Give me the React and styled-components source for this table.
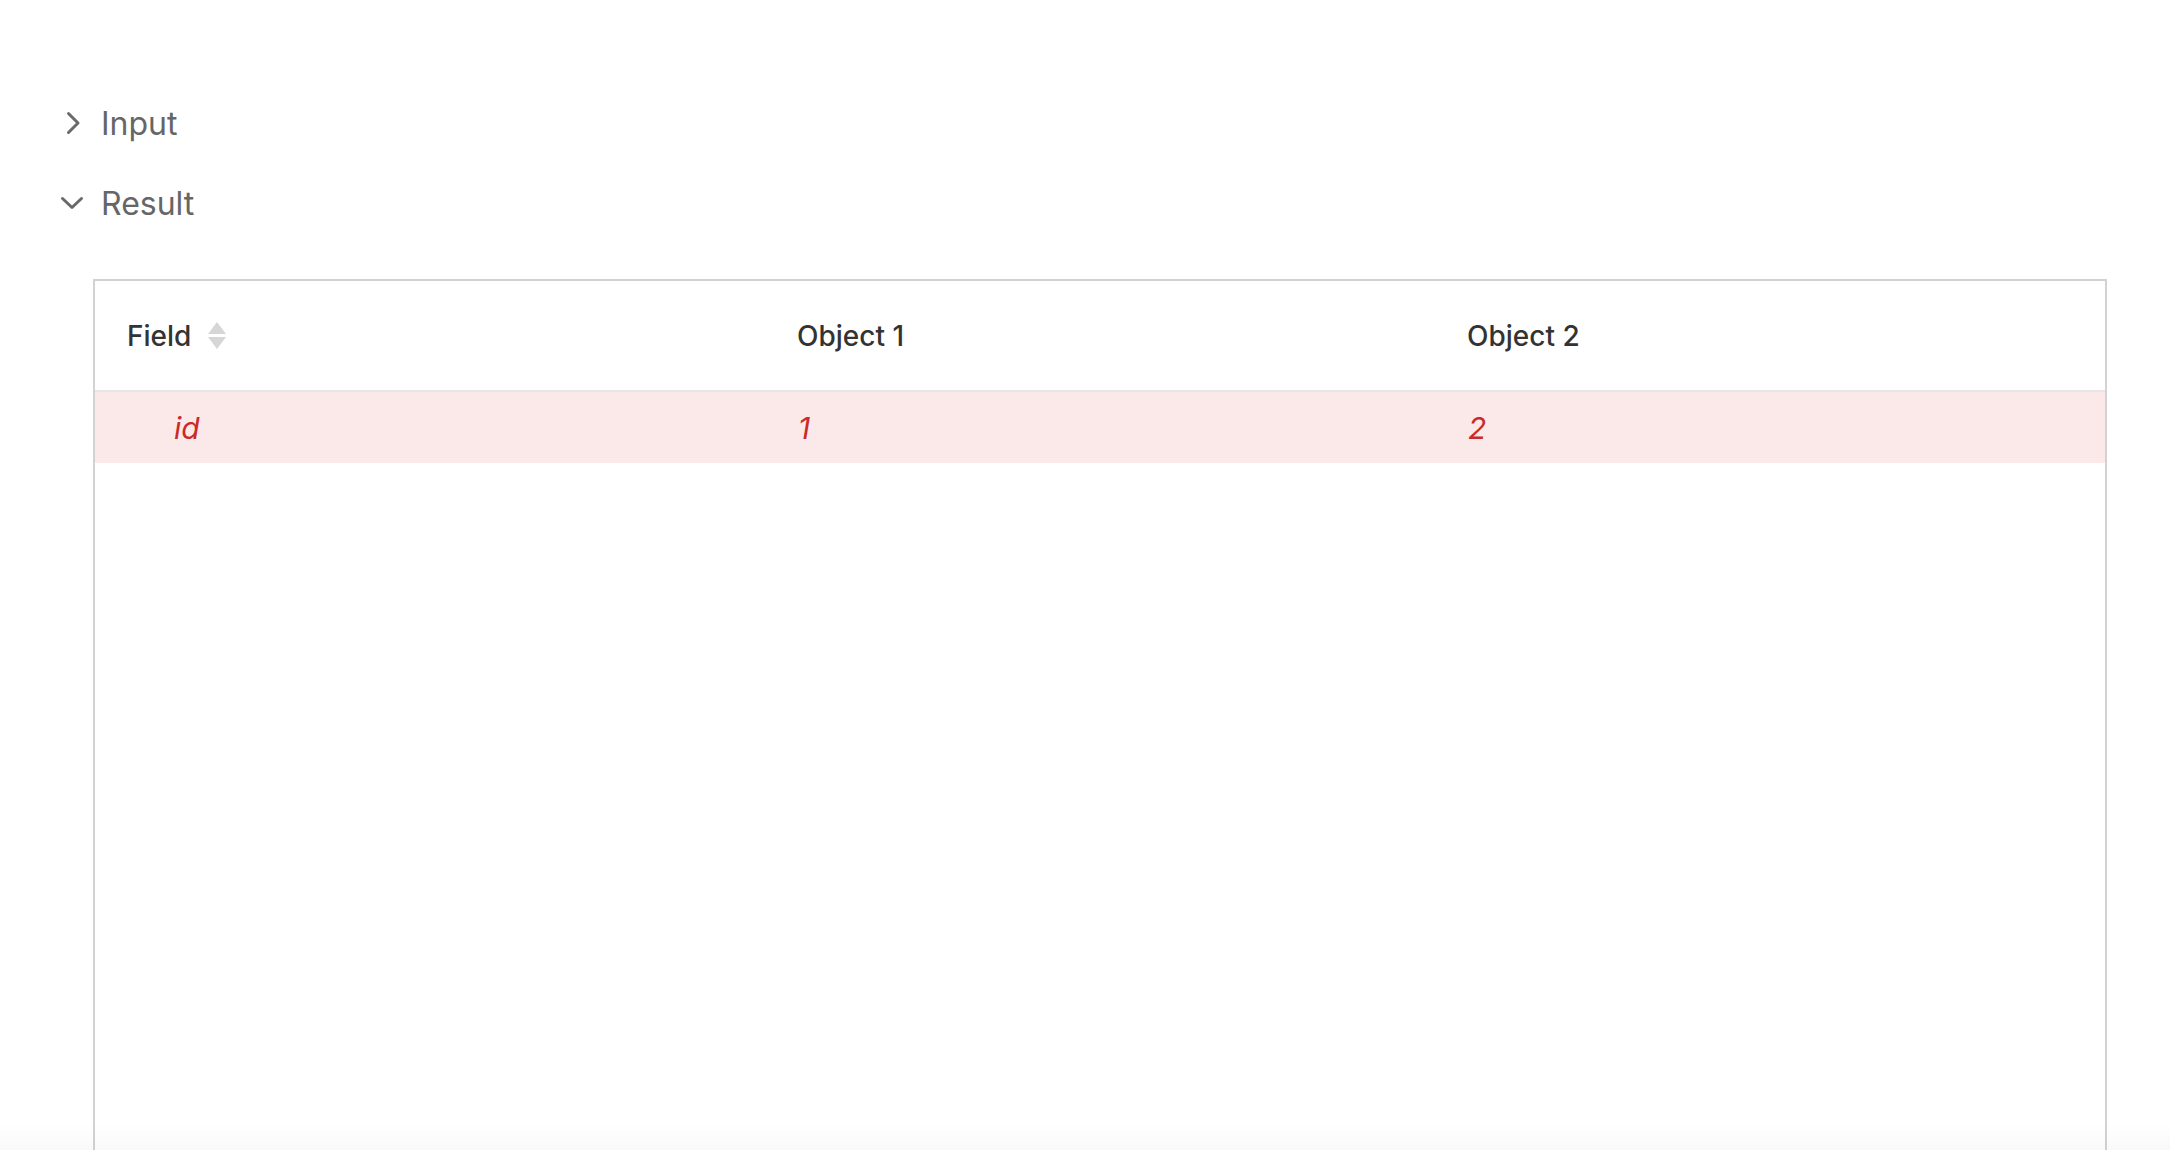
import styled, { createGlobalStyle } from "styled-components";

const GlobalStyle = createGlobalStyle`
  html, body {
    margin: 0;
    padding: 0;
    background: #ffffff;
    overflow: hidden;
  }
  body {
    font-family: Inter, "Noto Sans", "Liberation Sans", sans-serif;
  }
`;

const Page = styled.div`
  padding-top: 83px;
  height: 1150px;
  box-sizing: border-box;
`;

const SectionRow = styled.div`
  display: flex;
  align-items: center;
  height: 80px;
  padding-left: 58px;
  gap: 15px;
  color: #666666;
  font-size: 32px;
  cursor: pointer;
`;

const Chevron = styled.svg`
  width: 28px;
  height: 28px;
  flex: none;
  stroke: #6a6a6a;
  stroke-width: 3;
  fill: none;
  stroke-linecap: round;
  stroke-linejoin: round;
`;

const Table = styled.div`
  margin: 36px 63px 0 93px;
  border: 2px solid #d2d2d2;
  border-bottom: none;
  min-height: 1000px;
`;

const Row = styled.div`
  display: grid;
  grid-template-columns: 1fr 1fr 1fr;
  align-items: center;
  height: ${(p) => p.$height}px;
  background: ${(p) => (p.$changed ? "#fbe9e9" : "#ffffff")};
  border-bottom: ${(p) => (p.$header ? "2px solid #e6e6e6" : "none")};
`;

const HeadCell = styled.div`
  display: flex;
  align-items: center;
  gap: 17px;
  padding-left: 32px;
  font-size: 28px;
  font-weight: 500;
  color: #333333;
`;

const ValueCell = styled.div`
  padding-left: ${(p) => 33 + (p.$indent || 0)}px;
  font-size: 30px;
  font-style: italic;
  color: #c92a2a;
`;

const SortIcon = styled.svg`
  width: 18px;
  height: 28px;
  fill: #d6d6d6;
`;

const BottomFade = styled.div`
  position: fixed;
  left: 0;
  right: 0;
  bottom: 0;
  height: 26px;
  background: linear-gradient(rgba(0, 0, 0, 0), rgba(0, 0, 0, 0.025));
  pointer-events: none;
`;

const Section = ({ label, open }) => (
  <SectionRow>
    <Chevron viewBox="0 0 28 28">
      {open ? (
        <path d="M4.5 9.5 L14 18.5 L23.5 9.5" />
      ) : (
        <path d="M10.5 4.5 L20 14 L10.5 23.5" />
      )}
    </Chevron>
    <span>{label}</span>
  </SectionRow>
);

const rows = [{ field: "id", a: "1", b: "2", changed: true }];

export default function App() {
  return (
    <>
      <GlobalStyle />
      <Page>
        <Section label="Input" />
        <Section label="Result" open />
        <Table>
          <Row $header $height={109}>
            <HeadCell>
              Field
              <SortIcon viewBox="0 0 18 28">
                <polygon points="9,0 18,12 0,12" />
                <polygon points="0,15 18,15 9,27" />
              </SortIcon>
            </HeadCell>
            <HeadCell>Object 1</HeadCell>
            <HeadCell>Object 2</HeadCell>
          </Row>
          {rows.map((r) => (
            <Row key={r.field} $height={71} $changed={r.changed}>
              <ValueCell $indent={46}>{r.field}</ValueCell>
              <ValueCell>{r.a}</ValueCell>
              <ValueCell>{r.b}</ValueCell>
            </Row>
          ))}
        </Table>
      </Page>
      <BottomFade />
    </>
  );
}
